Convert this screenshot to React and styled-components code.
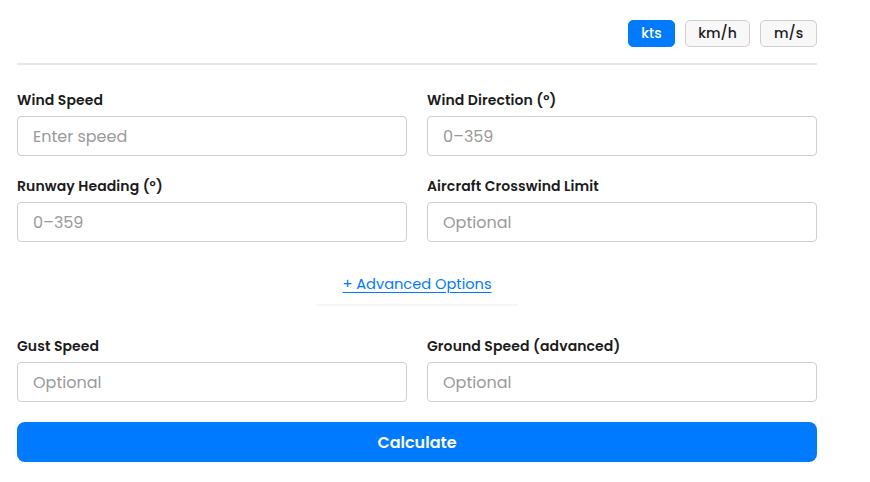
import React from "react";
import styled, { createGlobalStyle } from "styled-components";

const Global = createGlobalStyle`
  html, body { margin: 0; padding: 0; background: #fff; }
  body { font-family: "Poppins", Inter, "Noto Sans", sans-serif; color: #1c1c1c; }
  * { box-sizing: border-box; }
`;

const Page = styled.div`
  width: 800px;
  margin: 0 0 0 17px;
  padding-top: 20px;
`;

const UnitBar = styled.div`
  display: flex;
  justify-content: flex-end;
  gap: 10px;
  padding-bottom: 16px;
  border-bottom: 2px solid #e8e8e8;
`;

const UnitButton = styled.button`
  height: 27px;
  width: ${(p) => p.$w}px;
  padding: 0;
  border-radius: 5px;
  font-family: inherit;
  font-size: 14px;
  font-weight: 500;
  cursor: pointer;
  border: 1px solid ${(p) => (p.$active ? "#007bff" : "#cfcfcf")};
  background: ${(p) => (p.$active ? "#007bff" : "#f8f8f8")};
  color: ${(p) => (p.$active ? "#fff" : "#1c1c1c")};
`;

const Grid = styled.div`
  display: grid;
  grid-template-columns: 1fr 1fr;
  column-gap: 20px;
  row-gap: 20px;
  margin-top: ${(p) => p.$top}px;
`;

const Field = styled.div`
  display: flex;
  flex-direction: column;
  gap: 6px;
`;

const Label = styled.label`
  font-size: 14px;
  line-height: 20px;
  font-weight: 600;
  letter-spacing: 0.1px;
  color: #1c1c1c;
`;

const Input = styled.input`
  height: 40px;
  width: 100%;
  border: 1px solid #cfcfcf;
  border-radius: 4px;
  padding: 0 15px;
  font-family: inherit;
  font-size: 16px;
  color: #1c1c1c;
  outline: none;
  &::placeholder { color: #9a9a9a; }
`;

const AdvancedWrap = styled.div`
  display: flex;
  justify-content: center;
  margin-top: 32px;
`;

const AdvancedToggle = styled.button`
  width: 202px;
  background: transparent;
  border: none;
  border-bottom: 2px solid #f6f6f6;
  padding: 0 0 10px;
  font-family: inherit;
  font-size: 14.6px;
  line-height: 20px;
  color: #007bff;
  text-decoration: underline;
  text-underline-offset: 3px;
  cursor: pointer;
`;

const CalcButton = styled.button`
  display: block;
  width: 100%;
  height: 40px;
  margin-top: 20px;
  border: none;
  border-radius: 8px;
  background: #007bff;
  color: #fff;
  font-family: inherit;
  font-size: 16px;
  font-weight: 600;
  cursor: pointer;
`;

const units = [
  ["kts", 47, true],
  ["km/h", 65, false],
  ["m/s", 57, false],
];

const fields1 = [
  ["Wind Speed", "Enter speed"],
  ["Wind Direction (°)", "0–359"],
  ["Runway Heading (°)", "0–359"],
  ["Aircraft Crosswind Limit", "Optional"],
];
const fields2 = [
  ["Gust Speed", "Optional"],
  ["Ground Speed (advanced)", "Optional"],
];

export default function App() {
  return (
    <>
      <Global />
      <Page>
        <UnitBar>
          {units.map(([u, w, a]) => (
            <UnitButton key={u} $w={w} $active={a}>
              {u}
            </UnitButton>
          ))}
        </UnitBar>
        <Grid $top={25}>
          {fields1.map(([l, p]) => (
            <Field key={l}>
              <Label>{l}</Label>
              <Input placeholder={p} />
            </Field>
          ))}
        </Grid>
        <AdvancedWrap>
          <AdvancedToggle>+ Advanced Options</AdvancedToggle>
        </AdvancedWrap>
        <Grid $top={30}>
          {fields2.map(([l, p]) => (
            <Field key={l}>
              <Label>{l}</Label>
              <Input placeholder={p} />
            </Field>
          ))}
        </Grid>
        <CalcButton>Calculate</CalcButton>
      </Page>
    </>
  );
}
